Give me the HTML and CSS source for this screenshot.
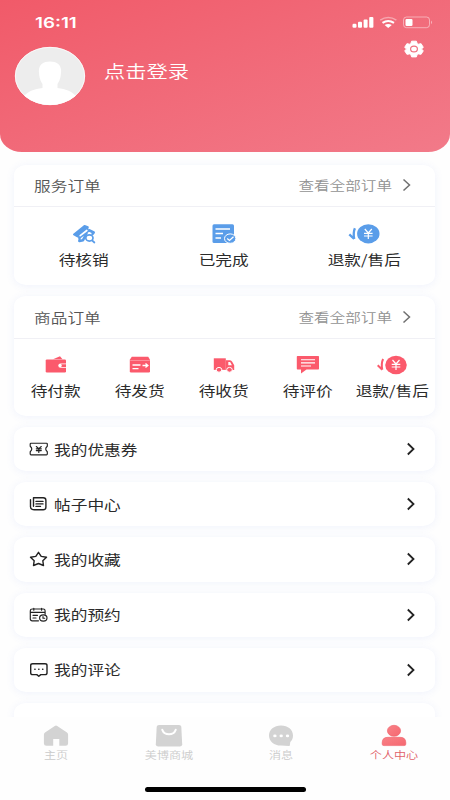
FILE: index.html
```html
<!DOCTYPE html>
<html lang="zh-CN">
<head>
<meta charset="utf-8">
<title>个人中心</title>
<link rel="stylesheet" href="styles.css">
</head>
<body>
<div class="app">
  <header class="hero">
    <div class="status">
      <span class="time">16:11</span>
      <svg class="signals" width="82" height="14" viewBox="0 0 82 14">
        <g fill="#fff">
          <rect x="0.5" y="7.8" width="4" height="4" rx="1.2"/><rect x="6" y="5.8" width="4" height="6" rx="1"/><rect x="11.6" y="3.4" width="4" height="8.4" rx="1"/><rect x="17.2" y="1" width="4.2" height="10.8" rx="1"/>
          <path d="M32.6 8.9Q36.200 6.900 39.800 8.900L36.200 12Z"/>
        </g>
        <path d="M30.500 6.900Q36.200 2.900 42 6.900" fill="none" stroke="#fff" stroke-width="2"/>
        <path d="M28.200 4.100Q36.200-1 44.400 4.100" fill="none" stroke="#fff" stroke-opacity=".4" stroke-width="1.500"/>
        <rect x="51.500" y="1" width="26" height="10.700" rx="3" fill="none" stroke="#fff" stroke-opacity=".45"/>
        <rect x="53.500" y="2.900" width="7" height="7" rx="1.200" fill="#fff"/>
        <path d="M79 4.600q2 1.800 0 3.600z" fill="#fff" fill-opacity=".5"/>
      </svg>
    </div>
    <div class="profile">
      <svg class="avatar" width="72" height="60" viewBox="0 0 72 60">
        <defs><clipPath id="face"><ellipse cx="36" cy="30" rx="35" ry="29"/></clipPath></defs>
        <ellipse cx="36" cy="30" rx="35" ry="29" fill="#ededed"/>
        <g clip-path="url(#face)" fill="#fff"><path d="M25 27C24 19 29 15.500 36 15.500S48 19 47 27C46.500 34 44.500 36 43.500 38V42C52 43 57 45 62 50V60H10V50C15 45 20 43 28.500 42V38C27.500 36 25.500 34 25 27Z"/></g>
        <ellipse cx="36" cy="30" rx="34.700" ry="28.700" fill="none" stroke="#fff" stroke-opacity=".8"/>
      </svg>
      <span class="login">点击登录</span>
      <svg class="gear" width="20" height="18" viewBox="0 0 20 18">
        <path d="M7.600 1.200h4.800l.8 2.500 1 .5 2.900-.5 2.200 3.700-2 1.600 2 1.700-2.200 3.600-2.900-.4-1 .5-.8 2.500H7.600l-.8-2.500-1-.5-2.900.4L.7 10.700l2-1.700-2-1.600 2.200-3.700 2.900.5 1-.5z" fill="#fff" stroke="#fff" stroke-linejoin="round"/>
        <ellipse cx="10" cy="9" rx="3.400" ry="2.900" fill="#fff" stroke="#f0717f" stroke-width="1.200"/>
      </svg>
    </div>
  </header>

  <main class="content">
    <section class="card">
      <div class="card-head">
        <h2>服务订单</h2>
        <a class="all"><span>查看全部订单</span><svg width="10" height="14" viewBox="0 0 10 14"><path d="M1.500 1.500 7.500 7 1.500 12.500" fill="none" stroke="#707070" stroke-width="1.500"/></svg></a>
      </div>
      <div class="grid three">
        <div class="cell">
          <svg width="24" height="20" viewBox="0 0 24 20">
            <g fill="none" stroke="#5a9de9" stroke-linejoin="round" stroke-linecap="round">
              <path d="M2 10.500 12.500 1.900 15.800 3.200 15 5.800 5.500 12.500Z" fill="#5a9de9" stroke-width="2"/>
              <path d="M7.500 13.500 17 6.300 21.700 8.500 20.500 10M7.500 17 11 16.200 14.500 9.500" stroke-width="2.600"/>
              <path d="M7.500 13.500V17" stroke-width="2.200"/>
              <path d="M8.200 11.700 14.800 6.500" stroke="#fff" stroke-width="1.700"/>
              <ellipse cx="17.400" cy="14" rx="3.600" ry="3.100" fill="#fff" stroke-width="1.700"/>
              <path d="m20.200 16.500 2.200 2" stroke-width="1.700"/>
            </g>
          </svg><span>待核销</span>
        </div>
        <div class="cell">
          <svg width="24" height="20" viewBox="0 0 24 20">
            <rect x=".5" y=".3" width="21.500" height="18.700" rx="1.500" fill="#5a9de9"/>
            <path d="M3.500 5H18M3.500 9.500H11M3.500 14H9" stroke="#fff" stroke-width="1.400"/>
            <ellipse cx="18.200" cy="14.600" rx="5.700" ry="4.700" fill="#5a9de9" stroke="#fff" stroke-width="1"/>
            <path d="m15.200 14.500 2.300 2 4-3.700" fill="none" stroke="#fff" stroke-width="1.300"/>
          </svg><span>已完成</span>
        </div>
        <div class="cell blue">
          <svg width="32" height="20" viewBox="0 0 32 20">
            <ellipse cx="20.300" cy="9.800" rx="11.200" ry="9.600" fill="currentColor"/>
            <path d="M6.900 4.200Q5 8.500 6.200 15M1.300 10.300 6.200 15" fill="none" stroke="currentColor" stroke-width="2.300"/>
            <path d="m16.800 5 3.500 4 3.500-4M20.300 9v6M16 9.300h8.600M16 12h8.600" fill="none" stroke="#fff" stroke-width="1.200"/>
          </svg><span>退款/售后</span>
        </div>
      </div>
    </section>

    <section class="card second">
      <div class="card-head">
        <h2>商品订单</h2>
        <a class="all"><span>查看全部订单</span><svg width="10" height="14" viewBox="0 0 10 14"><path d="M1.500 1.500 7.500 7 1.500 12.500" fill="none" stroke="#707070" stroke-width="1.500"/></svg></a>
      </div>
      <div class="grid five">
        <div class="cell">
          <svg width="22" height="20" viewBox="0 0 22 20">
            <path d="m8 4.200 7-2.900 2.500 2.900z" fill="#fb5a6c"/><rect x=".7" y="4.400" width="20.300" height="13" rx="1.200" fill="#fb5a6c"/>
            <path d="M22 8.400h-6.500q-2.200 0-2.200 2.200t2.200 2.200H22z" fill="#fff"/><path d="M21 9.300h-4.500q-1.200 1.300 0 2.600H21z" fill="#fb5a6c"/><circle cx="16" cy="10.600" r=".8" fill="#fff"/>
          </svg><span>待付款</span>
        </div>
        <div class="cell">
          <svg width="22" height="20" viewBox="0 0 22 20">
            <path d="M2.800 1.800h16.400l1.800 3v11.500q0 1.200-1.200 1.200H2Q.8 17.500.8 16.300V4.800z" fill="#fb5a6c"/>
            <path d="M1.200 5.500h19.600" stroke="#fda5af" stroke-width=".7"/>
            <path d="M3.500 10h8M3.500 13.700h6M13.500 10.500h5M16.500 8.500l2.400 2-2.400 2" fill="none" stroke="#fff" stroke-width="1.300"/>
          </svg><span>待发货</span>
        </div>
        <div class="cell">
          <svg width="22" height="20" viewBox="0 0 22 20">
            <path d="M.8 3.300h12v11.600H.8z" fill="#fb5a6c"/><path d="M12.800 5.200H17q1.400 0 2.200 1.600l2 3.500v4.600h-8.400z" fill="#fb5a6c"/>
            <path d="M15.300 7h1.800l1.900 3.300h-3.700z" fill="#fff"/>
            <g fill="#fb5a6c" stroke="#fff" stroke-width="1"><ellipse cx="6" cy="14.800" rx="2.800" ry="2.400"/><ellipse cx="16.500" cy="14.800" rx="2.800" ry="2.400"/></g>
          </svg><span>待收货</span>
        </div>
        <div class="cell">
          <svg width="24" height="20" viewBox="0 0 24 20">
            <path d="M1.500 1h20.800q.7 0 .7.700v12q0 .7-.7.700H10.500L5 18.500v-4.100H1.500q-.7 0-.7-.7v-12q0-.7.700-.7z" fill="#fb5a6c"/>
            <path d="M5 4.800h14M5 7.900h14M5 11h10" stroke="#fff" stroke-width="1.100"/>
          </svg><span>待评价</span>
        </div>
        <div class="cell red">
          <svg width="32" height="20" viewBox="0 0 32 20">
            <ellipse cx="20" cy="10" rx="10.800" ry="9.200" fill="currentColor"/>
            <path d="M7.100 4Q5 8.400 6.300 14.800M1.700 10.300 6.300 14.800" fill="none" stroke="currentColor" stroke-width="2"/>
            <path d="m16.500 5 3.500 4 3.500-4M20 9v6M15.700 9.300h8.600M15.700 12h8.600" fill="none" stroke="#fff" stroke-width="1.200"/>
          </svg><span>退款/售后</span>
        </div>
      </div>
    </section>

    <nav class="menu">
      <a class="row"><svg class="ico thin" width="20" height="16" viewBox="0 0 20 16"><path d="M2 2.200h15.500q.8 0 .8.800v2.300Q15.100 8 18.300 10.700V13q0 .8-.8.800H2q-.8 0-.8-.8v-2.300Q4.400 8 1.200 5.300V3q0-.8.800-.8zM7.300 5.500l2.500 2.100 2.500-2.100M9.800 7.600v3.800M7.300 7.800h5M7.300 9.600h5"/></svg><span>我的优惠券</span><svg class="chev" width="10" height="14" viewBox="0 0 10 14"><path d="m1.800 1.500 5.700 5.500-5.700 5.500"/></svg></a>
      <a class="row"><svg class="ico" width="20" height="16" viewBox="0 0 20 16"><path d="M4.500 1.800h9.700q2.700 0 2.700 2.600v6.800q0 2.600-2.700 2.600H5.500q-4 0-4-3V3.700M4.500 1.800v8.400M7 5.400h7M7 7.900h7M7 10.400h4.500"/></svg><span>帖子中心</span><svg class="chev" width="10" height="14" viewBox="0 0 10 14"><path d="m1.800 1.500 5.700 5.500-5.700 5.500"/></svg></a>
      <a class="row"><svg class="ico" width="20" height="16" viewBox="0 0 20 16"><path d="m9.500 1.300 2.700 4.100 5.300.9-3.700 3.400.7 4.800-5-2-5 2 .7-4.800L1.500 6.300l5.300-.9z"/></svg><span>我的收藏</span><svg class="chev" width="10" height="14" viewBox="0 0 10 14"><path d="m1.800 1.500 5.700 5.500-5.700 5.500"/></svg></a>
      <a class="row"><svg class="ico thin" width="20" height="16" viewBox="0 0 20 16"><path d="M9.500 13.800H3.200q-1.900 0-1.900-1.700V3.700Q1.300 2 3.200 2h11q1.900 0 1.900 1.700v3.500M1.300 5.400h14.800M4.800 1.200v2M12.600 1.200v2M4 8.300h4.500M4 11h3"/><ellipse cx="14.300" cy="11" rx="3.700" ry="3.100"/><path d="M14 9.500v1.700h1.700"/></svg><span>我的预约</span><svg class="chev" width="10" height="14" viewBox="0 0 10 14"><path d="m1.800 1.500 5.700 5.500-5.700 5.500"/></svg></a>
      <a class="row"><svg class="ico" width="20" height="16" viewBox="0 0 20 16"><path d="M3.700 1.700h12.300q2 0 2 1.700v7.500q0 1.700-2 1.700h-4.200l-2 1.700-2-1.700H3.700q-2 0-2-1.700V3.400q0-1.700 2-1.700zM5.800 7.200h.3M9.700 7.200h.3M13.600 7.200h.3"/></svg><span>我的评论</span><svg class="chev" width="10" height="14" viewBox="0 0 10 14"><path d="m1.800 1.500 5.700 5.500-5.700 5.500"/></svg></a>
      <div class="row"></div>
    </nav>
  </main>

  <footer class="tabs">
    <a class="tab"><svg width="28" height="24" viewBox="0 0 28 24"><path d="M14 1.500q.6 0 1.200.5l9.800 6.600q1.100.8 1.100 2v9q0 2.200-2.600 2.200h-6.200V15h-6.100v6.800H4.500q-2.600 0-2.600-2.200v-9q0-1.200 1.100-2L12.800 2q.6-.5 1.200-.5z" fill="#d3d3d3"/></svg><span>主页</span></a>
    <a class="tab"><svg width="28" height="24" viewBox="0 0 28 24"><path d="M4 1h20q2.100 0 2.300 1.700l.9 17.500q0 2.300-2.500 2.300H3.300Q.8 22.500.8 20.200l.9-17.500Q1.900 1 4 1z" fill="#d3d3d3"/><path d="M7.300 5.800Q9 10.300 14 10.300t6.700-4.500" fill="none" stroke="#fff" stroke-width="2" stroke-linecap="round"/></svg><span>美博商城</span></a>
    <a class="tab"><svg width="28" height="24" viewBox="0 0 28 24"><path d="M14 1.500c7 0 12 4.300 12 10 0 3-1 4.800-2.700 6.500l-.5 3.500q0 .5-.8.400L14 21.600c-7 0-12-4.300-12-10.100s5-10 12-10z" fill="#d3d3d3"/><g fill="#fff"><ellipse cx="7.900" cy="11.900" rx="1.700" ry="1.300"/><ellipse cx="14.200" cy="11.900" rx="1.700" ry="1.300"/><ellipse cx="20.500" cy="11.900" rx="1.700" ry="1.300"/></g></svg><span>消息</span></a>
    <a class="tab active"><svg width="28" height="24" viewBox="0 0 28 24"><defs><linearGradient id="person" x1="0" y1="0" x2="1" y2="1"><stop offset="0" stop-color="#f98187"/><stop offset="1" stop-color="#f56870"/></linearGradient></defs><ellipse cx="14" cy="6.800" rx="6.600" ry="5.500" fill="url(#person)" stroke="#ef5e68" stroke-width=".6"/><path d="M8 13.300h12q5.800 0 5.800 5.300v1.500q0 1.500-1.700 1.500H3.900q-1.700 0-1.700-1.500v-1.500q0-5.300 5.800-5.300z" fill="url(#person)" stroke="#ef5e68" stroke-width=".6"/></svg><span>个人中心</span></a>
    <div class="home-bar"></div>
  </footer>
</div>
</body>
</html>
```
FILE: styles.css
```css
* { box-sizing: border-box; }
body {
  margin: 0;
  background: #fefefe;
  font-family: "Noto Sans CJK SC", sans-serif;
  color: #2b2b2b;
}
svg { display: block; flex: none; }
span, h2 { white-space: nowrap; }
.app {
  width: 450px;
  height: 800px;
  display: flex;
  flex-direction: column;
  overflow: hidden;
}

.hero {
  flex: none;
  height: 152px;
  border-radius: 0 0 22px 22px / 0 0 18px 18px;
  background: linear-gradient(160deg, #f15a69 0%, #f16776 40%, #f27a89 100%);
}
.status {
  display: flex;
  justify-content: space-between;
  height: 40px;
  padding: 12px 16px 0 35px;
}
.time {
  font: 600 15px/22px Inter, sans-serif;
  color: #fff;
  transform: scaleX(1.25);
  transform-origin: left;
}
.signals { margin-top: 4px; }
.profile {
  display: flex;
  align-items: flex-start;
  padding: 6px 26px 0 14px;
}
.login {
  margin: 12px 0 0 18px;
  flex: 1;
  font-size: 17.5px;
  line-height: 26px;
  font-weight: 350;
  color: #fff;
  transform: scaleX(1.215);
  transform-origin: left;
}
.gear { margin-top: -6px; }

.content {
  flex: none;
  height: 565px;
  padding: 13px 15px 0 14px;
  overflow: hidden;
}
.card, .row {
  background: #fff;
  border-radius: 12px / 10px;
  box-shadow: 0 1px 8px rgba(90, 120, 230, .09);
}
.card { height: 120px; }
.card.second { margin-top: 11px; }
.card-head {
  display: flex;
  align-items: center;
  justify-content: space-between;
  height: 42px;
  padding: 0 23px 2px 19.5px;
  border-bottom: 1px solid #f0f0f5;
}
h2 {
  margin: 0;
  font-size: 13.8px;
  font-weight: 350;
  line-height: 20px;
  color: #555;
  transform: scaleX(1.21);
  transform-origin: left;
}
.all { display: flex; align-items: center; }
.all span {
  font-size: 13px;
  line-height: 20px;
  font-weight: 350;
  color: #929292;
  margin-right: 10px;
  transform: scaleX(1.2);
  transform-origin: right;
}
.second .card-head { height: 43px; padding-bottom: 1px; }
.grid { display: grid; padding-top: 17px; }
.three { grid-template-columns: repeat(3, 140px); }
.five { grid-template-columns: repeat(5, 84px); padding-top: 16px; }
.cell { display: flex; flex-direction: column; align-items: center; }
.cell span {
  margin-top: 5px;
  font-size: 13.8px;
  line-height: 20px;
  transform: scaleX(1.21);
}
.blue { color: #5a9de9; }
.red { color: #fb5a6c; }
.blue span, .red span { color: #2b2b2b; }

.menu {
  display: flex;
  flex-direction: column;
  gap: 11px;
  padding-top: 11px;
}
.row {
  display: flex;
  align-items: center;
  flex: none;
  height: 44.2px;
  padding: 0 19px 0 14.5px;
}
.row span {
  flex: 1;
  margin: -1px 0 0 5.5px;
  font-size: 13.8px;
  line-height: 20px;
  transform: scaleX(1.21);
  transform-origin: left;
}
.ico { fill: none; stroke: #222; stroke-width: 1.4; stroke-linejoin: round; stroke-linecap: round; }
.thin { stroke-width: 1.15; }
.chev { fill: none; stroke: #222; stroke-width: 1.8; }

.tabs {
  position: relative;
  flex: none;
  display: grid;
  grid-template-columns: repeat(4, 112.5px);
  height: 83px;
  padding-top: 7px;
  background: #fefefe;
}
.tab { display: flex; flex-direction: column; align-items: center; }
.tab span {
  margin-top: -1px;
  font-size: 10px;
  line-height: 16px;
  font-weight: 350;
  color: #cbcbcb;
  transform: scaleX(1.21);
}
.tab.active span { color: #e15e69; }
.home-bar {
  position: absolute;
  left: 145px;
  top: 70px;
  width: 161px;
  height: 5px;
  border-radius: 3px;
  background: #000;
}
```
